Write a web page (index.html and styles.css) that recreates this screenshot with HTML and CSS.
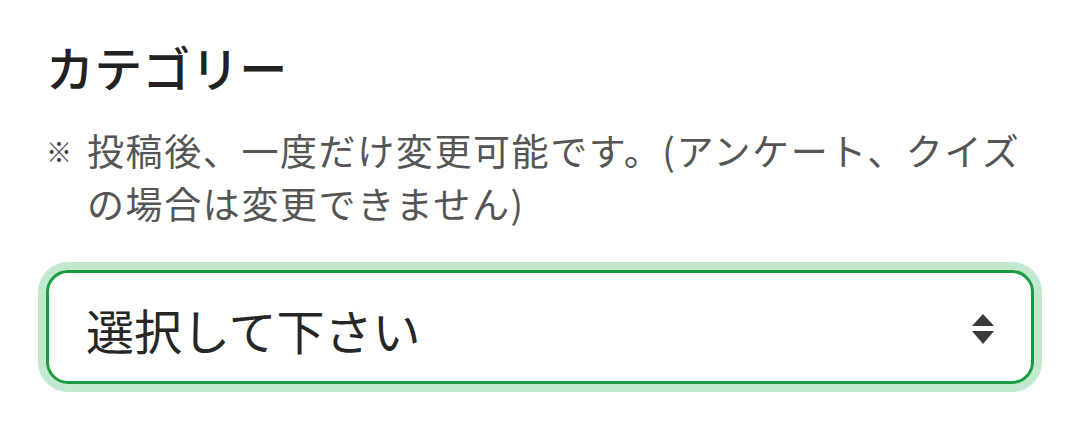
FILE: index.html
```html
<!DOCTYPE html>
<html lang="ja">
<head>
<meta charset="utf-8">
<link rel="stylesheet" href="styles.css">
</head>
<body>
<div class="field">
  <h2 class="title">カテゴリー</h2>
  <p class="note"><span class="mark">※</span><span class="note-text">投稿後、一度だけ変更可能です。(アンケート、クイズの場合は変更できません)</span></p>
  <div class="select">
    <span class="select-text">選択して下さい</span>
    <svg class="arrows" width="22" height="31" viewBox="0 0 22 31" aria-hidden="true">
      <path d="M11 0 L22 12 L0 12 Z" fill="#3a3a3a"/>
      <path d="M0 17 L22 17 L11 30 Z" fill="#3a3a3a"/>
    </svg>
  </div>
</div>
</body>
</html>
```
FILE: styles.css
```css
html, body {
  margin: 0;
  padding: 0;
  background: #ffffff;
}
body {
  font-family: "Noto Sans CJK JP", "Noto Sans", sans-serif;
}
.field {
  width: 988px;
  padding: 34px 0 20px 46px;
}
.title {
  margin: 0;
  font-size: 48px;
  font-weight: 500;
  line-height: 64px;
  letter-spacing: 0.3px;
  color: #222222;
}
.note {
  margin: 26px 0 0;
  display: flex;
  font-size: 37px;
  line-height: 53px;
  letter-spacing: 1.6px;
  color: #555555;
}
.mark {
  flex: none;
  width: 41px;
  font-size: 26px;
  letter-spacing: 0;
  color: #444444;
}
.note-text {
  flex: 1;
}
.select {
  margin-top: 40px;
  box-sizing: border-box;
  height: 114px;
  border: 3px solid #1a9d40;
  border-radius: 22px;
  box-shadow: 0 0 0 8px #c2e9cf;
  display: flex;
  align-items: center;
  justify-content: space-between;
  padding: 4px 37px 0 37px;
}
.select-text {
  font-size: 48px;
  color: #262626;
}
.arrows {
  display: block;
}
```
